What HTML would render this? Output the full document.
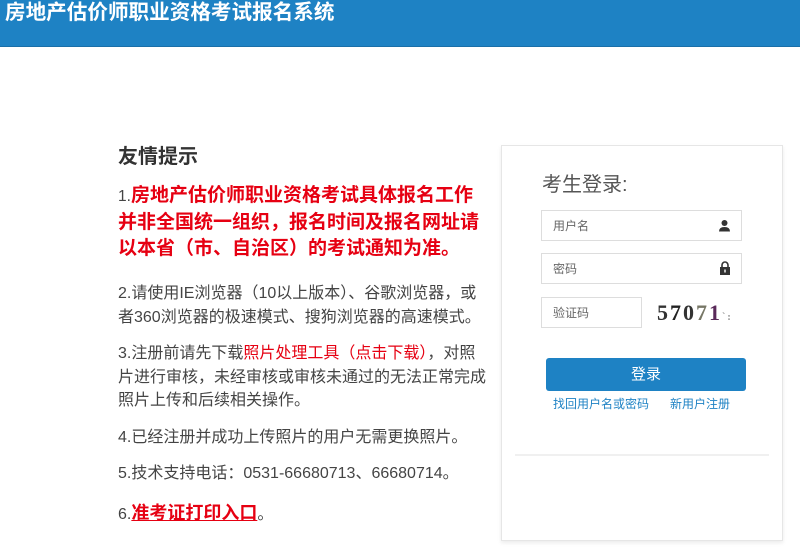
<!DOCTYPE html>
<html><head><meta charset="utf-8"><style>
*{margin:0;padding:0;box-sizing:border-box}
body{width:800px;height:555px;overflow:hidden;background:#fff;font-family:"Liberation Sans","Noto Sans CJK SC",sans-serif;position:relative}
.hd{position:absolute;left:0;top:0;width:800px;height:47px;background:#1e82c4;border-bottom:1px solid #1a6fa8}
.hd h1{position:absolute;left:5px;top:0px;color:#fff;font-size:20.6px;font-weight:bold;line-height:26px}
.l{position:absolute;left:118px;color:#444;font-size:16px;line-height:23.5px;white-space:nowrap}
.r{color:#e60012;font-weight:bold}
.box{position:absolute;left:501px;top:145px;width:282px;height:396px;border:1px solid #e6e6e6;box-shadow:0 2px 4px rgba(0,0,0,.08)}
.in{position:absolute;border:1px solid #ddd;height:31px;font-size:12px;color:#666;padding:7px 11px;line-height:16px}
</style></head><body>
<div class="hd"><h1>房地产估价师职业资格考试报名系统</h1></div>
<div class="l" style="top:143px;font-size:20px;font-weight:bold;line-height:28px;color:#333">友情提示</div>
<div class="l" style="top:183px;font-size:19px;line-height:26px"><span style="font-size:15.5px">1.</span><span class="r">房地产估价师职业资格考试具体报名工作<br>并非全国统一组织，报名时间及报名网址请<br>以本省（市、自治区）的考试通知为准。</span></div>
<div class="l" style="top:282px">2.请使用IE浏览器（10以上版本）、谷歌浏览器，或<br>者360浏览器的极速模式、搜狗浏览器的高速模式。</div>
<div class="l" style="top:342px">3.注册前请先下载<span style="color:#e60012">照片处理工具（点击下载）</span>，对照<br>片进行审核，未经审核或审核未通过的无法正常完成<br>照片上传和后续相关操作。</div>
<div class="l" style="top:426px">4.已经注册并成功上传照片的用户无需更换照片。</div>
<div class="l" style="top:462px">5.技术支持电话：0531-66680713、66680714。</div>
<div class="l" style="top:502px">6.<span class="r" style="font-size:18px;text-decoration:underline">准考证打印入口</span>。</div>
<div class="box"></div>
<div style="position:absolute;left:542px;top:172px;font-size:20px;color:#555;line-height:26px">考生登录:</div>
<div class="in" style="left:541px;top:210px;width:201px">用户名<svg style="position:absolute;right:10px;top:8px" width="13" height="13" viewBox="0 0 13 13"><circle cx="6.5" cy="4" r="3" fill="#333"/><path d="M1 12.5 Q1 8 6.5 8 Q12 8 12 12.5Z" fill="#333"/></svg></div>
<div class="in" style="left:541px;top:253px;width:201px">密码<svg style="position:absolute;right:10px;top:7px" width="12" height="14" viewBox="0 0 12 14"><path d="M3 6V4a3 3 0 016 0v2" stroke="#333" stroke-width="1.6" fill="none"/><rect x="1" y="6" width="10" height="8" fill="#333"/><rect x="5.3" y="8.5" width="1.4" height="3" fill="#fff"/></svg></div>
<div class="in" style="left:541px;top:297px;width:101px">验证码</div>
<div style="position:absolute;left:657px;top:300px;font:bold 22px 'Liberation Serif',serif;letter-spacing:2px;color:#333">5<span style="color:#222">7</span>0<span style="color:#776">7</span><span style="color:#5a2a5a">1</span><span style="font-size:10px;color:#888">ˋ:</span></div>
<div style="position:absolute;left:546px;top:358px;width:200px;height:33px;background:#1e82c4;border-radius:3px;color:#fff;font-size:15px;text-align:center;line-height:33px">登录</div>
<div style="position:absolute;left:553px;top:396px;font-size:12px;color:#1e82c4;line-height:16px">找回用户名或密码</div>
<div style="position:absolute;left:670px;top:396px;font-size:12px;color:#1e82c4;line-height:16px">新用户注册</div>
<div style="position:absolute;left:515px;top:454px;width:254px;height:2px;background:#f0f0f0"></div>
</body></html>
